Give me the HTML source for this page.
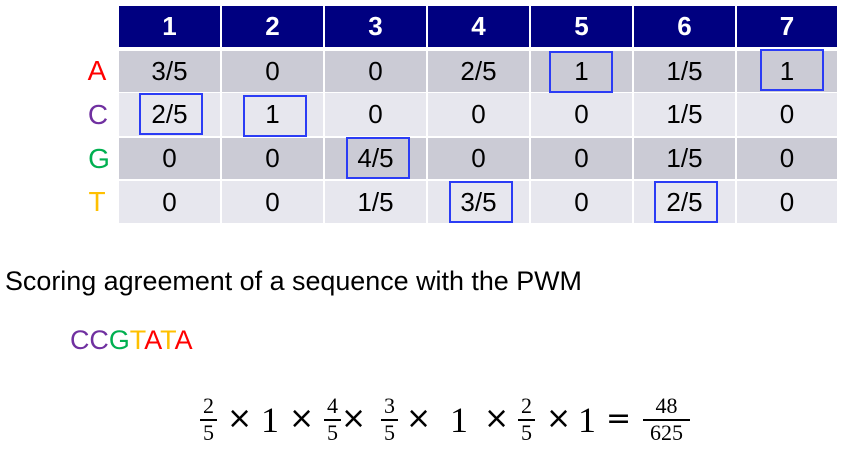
<!DOCTYPE html>
<html><head><meta charset="utf-8"><style>
body{margin:0;width:845px;height:463px;background:#fff;position:relative;overflow:hidden;font-family:"Liberation Sans",Arial,sans-serif}
.c{position:absolute;display:flex;align-items:center;justify-content:center;font-size:26px;color:#000}
.h{background:#000080;color:#fff;font-weight:bold}
.a{background:#cbcbd5}.b{background:#e7e7ee}
.box{position:absolute;border:2px solid #2b3cf5;box-sizing:border-box;width:64px;height:42px}
.l{position:absolute;font-size:28px;width:30px;text-align:center}
.m{position:absolute;font-family:"Liberation Serif","DejaVu Serif",serif;color:#000;font-size:36px;line-height:36px;top:402px}
.x{position:absolute;font-family:"DejaVu Sans",sans-serif;color:#000;font-size:30px;line-height:36px;top:401px}
.fr{position:absolute;text-align:center;font-family:"Liberation Serif",serif;font-size:22px;line-height:24px;top:394px}
.fr .n{border-bottom:2px solid #000;padding-bottom:1px}
</style></head><body>
<div id="t"></div>
<script>
var xs=[119,222,325,428,531,634,737,839];
var ys=[[6,47],[51,92],[93,136],[138,179],[181,223]];
var data=[["1","2","3","4","5","6","7"],["3/5","0","0","2/5","1","1/5","1"],["2/5","1","0","0","0","1/5","0"],["0","0","4/5","0","0","1/5","0"],["0","0","1/5","3/5","0","2/5","0"]];
var cls=["h","a","b","a","b"];var out="";
for(var r=0;r<5;r++)for(var c=0;c<7;c++){out+='<div class="c '+cls[r]+'" style="left:'+xs[c]+'px;top:'+ys[r][0]+'px;width:'+(xs[c+1]-xs[c]-2)+'px;height:'+(ys[r][1]-ys[r][0])+'px">'+data[r][c]+'</div>';}
document.getElementById('t').innerHTML=out;
</script>
<div class="box" style="left:549px;top:51px"></div>
<div class="box" style="left:760px;top:49px"></div>
<div class="box" style="left:139px;top:93px"></div>
<div class="box" style="left:243px;top:95px"></div>
<div class="box" style="left:346px;top:137px"></div>
<div class="box" style="left:449px;top:181px"></div>
<div class="box" style="left:654px;top:181px"></div>
<div class="l" style="left:82px;top:55px;color:#ff0000">A</div>
<div class="l" style="left:83px;top:99px;color:#7030a0">C</div>
<div class="l" style="left:84px;top:143px;color:#00b050">G</div>
<div class="l" style="left:82px;top:186px;color:#ffc000">T</div>
<div style="position:absolute;left:5px;top:266px;font-size:26.9px;white-space:nowrap">Scoring agreement of a sequence with the PWM</div>
<div style="position:absolute;left:70px;top:325px;font-size:26.9px"><span style="color:#7030a0">CC</span><span style="color:#00b050">G</span><span style="color:#ffc000">T</span><span style="color:#ff0000">A</span><span style="color:#ffc000">T</span><span style="color:#ff0000">A</span></div>
<div class="fr" style="left:200px;width:17px"><div class="n">2</div><div>5</div></div>
<div class="x" style="left:227px">×</div>
<div class="m" style="left:261px">1</div>
<div class="x" style="left:289px">×</div>
<div class="fr" style="left:324px;width:17px"><div class="n">4</div><div>5</div></div>
<div class="x" style="left:341px">×</div>
<div class="fr" style="left:381px;width:17px"><div class="n">3</div><div>5</div></div>
<div class="x" style="left:406px">×</div>
<div class="m" style="left:450px">1</div>
<div class="x" style="left:484px">×</div>
<div class="fr" style="left:518px;width:17px"><div class="n">2</div><div>5</div></div>
<div class="x" style="left:546px">×</div>
<div class="m" style="left:578px">1</div>
<div class="x" style="left:606px">=</div>
<div class="fr" style="left:643px;width:47px"><div class="n">48</div><div>625</div></div>
</body></html>
